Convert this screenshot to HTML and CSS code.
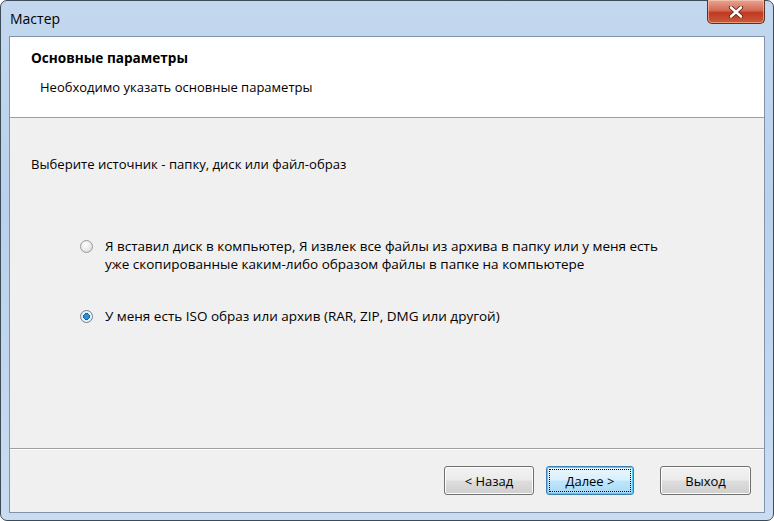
FILE: index.html
```html
<!DOCTYPE html>
<html lang="ru">
<head>
<meta charset="utf-8">
<title>Мастер</title>
<link rel="stylesheet" href="styles.css">
</head>
<body>
<div class="window">
  <div class="titlebar">
    <span class="title">Мастер</span>
    <button class="close" aria-label="Закрыть">
      <svg width="18" height="12" viewBox="0 0 18 12"><path d="M4 1.5 L14 10.5 M14 1.5 L4 10.5" stroke="#5a1a10" stroke-width="4.2" stroke-linecap="round"/><path d="M4 1.5 L14 10.5 M14 1.5 L4 10.5" stroke="#fff" stroke-width="2.6" stroke-linecap="round"/></svg>
    </button>
  </div>
  <div class="client">
    <div class="header">
      <div class="h-title">Основные параметры</div>
      <div class="h-sub">Необходимо указать основные параметры</div>
    </div>
    <div class="content">
      <div class="prompt">Выберите источник - папку, диск или файл-образ</div>
      <div class="options">
        <label class="option">
          <span class="radio"></span>
          <span class="opt-text">Я вставил диск в компьютер, Я извлек все файлы из архива в папку или у меня есть<br>уже скопированные каким-либо образом файлы в папке на компьютере</span>
        </label>
        <label class="option">
          <span class="radio checked"></span>
          <span class="opt-text">У меня есть ISO образ или архив (RAR, ZIP, DMG или другой)</span>
        </label>
      </div>
    </div>
    <div class="footer">
      <button class="btn">&lt; Назад</button>
      <button class="btn default">Далее &gt;</button>
      <button class="btn exit">Выход</button>
    </div>
  </div>
</div>
</body>
</html>
```
FILE: styles.css
```css
html, body {
  margin: 0;
  padding: 0;
  background: #ffffff;
}
body {
  width: 774px;
  height: 521px;
  overflow: hidden;
  font-family: "Liberation Sans", Arial, sans-serif;
}
.window {
  box-sizing: border-box;
  width: 774px;
  height: 521px;
  border: 1px solid #3d4a58;
  border-radius: 7px;
  background: linear-gradient(180deg, #c3d8ee 0%, #b9d1eb 40%, #c9dcf1 100%);
  display: flex;
  flex-direction: column;
  padding: 0 8px 7px 8px;
}
.titlebar {
  height: 35px;
  flex: none;
  display: flex;
  align-items: flex-start;
  justify-content: space-between;
}
.title {
  font-family: "Open Sans", "Liberation Sans", sans-serif;
  font-size: 14px;
  color: #000;
  margin: 8px 0 0 1px;
}
.close {
  width: 58px;
  height: 24px;
  margin: -1px 0 0 0;
  border: 1px solid #5b3226;
  border-top: none;
  border-radius: 0 0 5px 5px;
  background: linear-gradient(180deg, #e8a593 0%, #d46a55 45%, #c03a20 55%, #cc5a3c 100%);
  box-shadow: inset 0 0 0 1px rgba(255,220,200,0.5);
  display: flex;
  align-items: center;
  justify-content: center;
  padding: 0;
}
.client {
  flex: 1;
  display: flex;
  flex-direction: column;
  border: 1px solid #8193a8;
  background: #f0f0f0;
}
.header {
  height: 81px;
  flex: none;
  box-sizing: border-box;
  background: #ffffff;
  border-bottom: 1px solid #a0a0a0;
  padding: 11px 0 0 21px;
}
.h-title {
  font-family: "Open Sans", "Liberation Sans", sans-serif;
  font-weight: bold;
  font-size: 13.6px;
  color: #000;
}
.h-sub {
  font-family: "Open Sans", "Liberation Sans", sans-serif;
  font-size: 13px;
  color: #000;
  margin: 11px 0 0 9px;
}
.content {
  flex: 1;
  padding: 38px 0 0 21px;
  font-family: "Open Sans", "Liberation Sans", sans-serif;
  font-size: 13.1px;
  color: #000;
  border-bottom: 1px solid #a0a0a0;
  box-shadow: 0 1px 0 #ffffff;
}
.prompt {
  line-height: 16px;
}
.options {
  display: flex;
  flex-direction: column;
  gap: 34px;
  margin: 65px 0 0 49px;
  font-size: 13.5px;
}
.option {
  display: flex;
  align-items: flex-start;
  gap: 12px;
  line-height: 18px;
}
.radio {
  box-sizing: border-box;
  width: 13px;
  height: 13px;
  margin-top: 3px;
  border-radius: 50%;
  border: 1px solid #9a9a9a;
  background: radial-gradient(circle at 40% 35%, #ffffff 0%, #e6e6e6 60%, #cfcfcf 100%);
  flex: none;
}
.radio.checked {
  border-color: #6b7f92;
  background: radial-gradient(circle, #2a90d0 0 2.2px, #0b5b96 3.3px, #e6edf3 3.6px, #f4f4f4 100%);
}
.footer {
  box-sizing: border-box;
  height: 63px;
  flex: none;
  display: flex;
  align-items: flex-start;
  padding: 17px 0 0 434px;
  gap: 12px;
}
.btn {
  box-sizing: border-box;
  width: 90px;
  height: 29px;
  border: 1px solid #707070;
  border-radius: 3px;
  background: linear-gradient(180deg, #f2f2f2 0%, #ebebeb 48%, #dddddd 52%, #cfcfcf 100%);
  box-shadow: inset 0 0 0 1px #fcfcfc;
  font-family: "Open Sans", "Liberation Sans", sans-serif;
  font-size: 13px;
  color: #000;
  padding: 0;
}
.btn.default {
  width: 88px;
  border-color: #3c7fb1;
  box-shadow: inset 0 0 0 1px #48d0f8;
  outline: 1px dotted #000;
  outline-offset: -4px;
  background: linear-gradient(180deg, #eaf6fd 0%, #d9f0fc 48%, #bee6fd 52%, #a7d9f5 100%);
}
.btn.exit {
  margin-left: 14px;
  width: 91px;
}
```
